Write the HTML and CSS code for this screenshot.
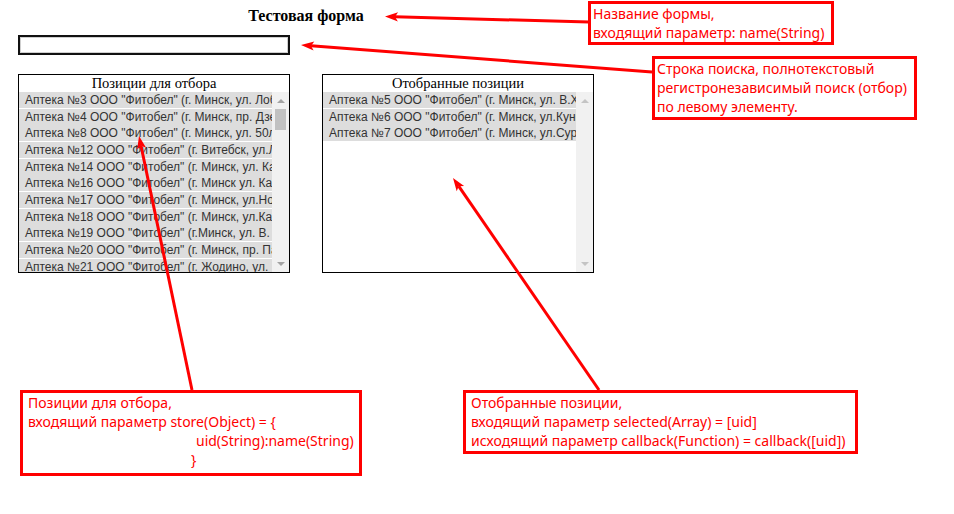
FILE: index.html
```html
<!DOCTYPE html>
<html lang="ru">
<head>
<meta charset="utf-8">
<title>Тестовая форма</title>
<link rel="stylesheet" href="styles.css">
</head>
<body>
<div class="page">
  <form class="form">
    <h1 class="form-title">Тестовая форма</h1>
    <input class="search" type="text">
    <div class="panels">
      <section class="panel">
        <div class="panel-title">Позиции для отбора</div>
        <div class="panel-body">
          <ul class="list">
            <li>Аптека №3 ООО "Фитобел" (г. Минск, ул. Лобанка, 94)</li>
            <li>Аптека №4 ООО "Фитобел" (г. Минск, пр. Дзержинского, 11)</li>
            <li>Аптека №8 ООО "Фитобел" (г. Минск, ул. 50лет Победы, 27)</li>
            <li>Аптека №12 ООО "Фитобел" (г. Витебск, ул.Ленина, 26)</li>
            <li>Аптека №14 ООО "Фитобел" (г. Минск, ул. Калиновского, 8)</li>
            <li>Аптека №16 ООО "Фитобел" (г. Минск ул. Казинца, 52)</li>
            <li>Аптека №17 ООО "Фитобел" (г. Минск, ул.Новаторская, 4)</li>
            <li>Аптека №18 ООО "Фитобел" (г. Минск, ул.Кальварийская, 7)</li>
            <li>Аптека №19 ООО "Фитобел" (г.Минск, ул. В. Хоружей, 32)</li>
            <li>Аптека №20 ООО "Фитобел" (г. Минск, пр. Партизанский, 6)</li>
            <li>Аптека №21 ООО "Фитобел" (г. Жодино, ул. Гагарина, 3)</li>
            <li>Аптека №22 ООО "Фитобел" (г. Минск, ул. Есенина, 1)</li>
          </ul>
          <div class="scrollbar">
            <span class="sb-btn"><i class="tri tri-up"></i></span>
            <span class="thumb"></span>
            <span class="sb-btn sb-end"><i class="tri tri-down"></i></span>
          </div>
        </div>
      </section>
      <section class="panel">
        <div class="panel-title">Отобранные позиции</div>
        <div class="panel-body">
          <ul class="list">
            <li>Аптека №5 ООО "Фитобел" (г. Минск, ул. В.Хоружей, 6)</li>
            <li>Аптека №6 ООО "Фитобел" (г. Минск, ул.Кунцевщина, 18)</li>
            <li>Аптека №7 ООО "Фитобел" (г. Минск, ул.Сурганова, 43)</li>
          </ul>
          <div class="scrollbar scrollbar-idle">
            <span class="sb-btn"><i class="tri tri-up"></i></span>
            <span class="sb-btn sb-end"><i class="tri tri-down"></i></span>
          </div>
        </div>
      </section>
    </div>
  </form>

  <div class="note note-name">Название формы,<br>входящий параметр: name(String)</div>
  <div class="note note-search">Строка поиска, полнотекстовый<br>регистронезависимый поиск (отбор)<br>по левому элементу.</div>
  <div class="note note-store">Позиции для отбора,<br>входящий параметр store(Object) = {<br><span class="indent-1">uid(String):name(String)</span><br><span class="indent-2">}</span></div>
  <div class="note note-selected">Отобранные позиции,<br>входящий параметр selected(Array) = [uid]<br>исходящий параметр callback(Function) = callback([uid])</div>

  <svg class="arrows" width="954" height="514" viewBox="0 0 954 514">
    <g stroke="#ff0000" stroke-width="3" fill="none" stroke-linecap="butt">
      <line x1="589" y1="22" x2="395" y2="16.8"/>
      <line x1="652" y1="72" x2="311" y2="45.8"/>
      <line x1="192" y1="390" x2="141" y2="145.8"/>
      <line x1="599" y1="390" x2="458.7" y2="186.2"/>
    </g>
    <g fill="#ff0000">
      <polygon points="385,16.5 398.1,12.3 395,16.8 397.9,21.4"/>
      <polygon points="301,45 314.3,41.5 311,45.8 313.6,50.5"/>
      <polygon points="139,136 146.1,147.8 141,145.8 137.2,149.6"/>
      <polygon points="453,178 464.1,186.1 458.7,186.2 456.7,191.3"/>
    </g>
  </svg>
</div>
</body>
</html>
```

FILE: styles.css
```css
html, body {
  margin: 0;
  padding: 0;
  background: #ffffff;
}

.page {
  position: relative;
  width: 954px;
  height: 514px;
  overflow: hidden;
}

.form {
  width: 576px;
  padding: 7px 0 0 18px;
  margin: 0;
}

.form-title {
  margin: 0;
  font: bold 16px/18px "Liberation Serif", "Times New Roman", serif;
  text-align: center;
  color: #000;
}

.search {
  display: block;
  box-sizing: border-box;
  width: 272px;
  height: 20px;
  margin: 10px 0 0 0;
  padding: 0 3px;
  border: 2px solid #111;
  box-shadow: inset 0 0 0 1px #cfcfcf;
  background: #fff;
  outline: none;
}

.panels {
  display: flex;
  gap: 32px;
  margin-top: 19px;
}

.panel {
  box-sizing: border-box;
  width: 272px;
  height: 199px;
  border: 1px solid #000;
  display: flex;
  flex-direction: column;
}

.panel-title {
  height: 17px;
  font: 14.5px/17px "Liberation Serif", "Times New Roman", serif;
  text-align: center;
  color: #000;
}

.panel-body {
  flex: 1;
  min-height: 0;
  display: flex;
}

.list {
  flex: 1;
  min-width: 0;
  margin: 0;
  padding: 0;
  list-style: none;
  overflow: hidden;
}

.list li {
  height: 16px;
  margin-bottom: 1px;
  padding-left: 6px;
  background: #dddddd;
  font: 12px/16px "Liberation Sans", Arial, sans-serif;
  color: #333;
  white-space: nowrap;
  overflow: hidden;
  text-overflow: clip;
}

.list li:nth-child(3n+2) {
  margin-bottom: 0;
}

.scrollbar {
  width: 17px;
  flex: none;
  background: #f1f1f1;
  display: flex;
  flex-direction: column;
}

.sb-btn {
  height: 17px;
  display: flex;
  align-items: center;
  justify-content: center;
}

.sb-end {
  margin-top: auto;
}

.thumb {
  height: 21px;
  width: 11px;
  margin-left: 3px;
  background: #c1c1c1;
}

.tri {
  width: 0;
  height: 0;
  border-left: 4px solid transparent;
  border-right: 4px solid transparent;
}

.tri-up {
  border-bottom: 4px solid #a3a3a3;
}

.tri-down {
  border-top: 4px solid #a3a3a3;
}

.scrollbar-idle .tri-up {
  border-bottom-color: #c4c4c4;
}

.scrollbar-idle .tri-down {
  border-top-color: #c4c4c4;
}

.note {
  position: absolute;
  box-sizing: border-box;
  border: 3px solid #ff0000;
  background: #fff;
  color: #ff0000;
  font: 14px/19px "Noto Sans", "Open Sans", sans-serif;
  padding: 0 0 0 2px;
  white-space: nowrap;
}

.note-name {
  left: 588px;
  top: 1px;
  width: 246px;
  height: 44px;
}

.note-search {
  left: 652px;
  top: 56px;
  width: 265px;
  height: 64px;
}

.note-store {
  left: 20px;
  top: 390px;
  width: 342px;
  height: 86px;
  padding-left: 5px;
}

.note-selected {
  left: 463px;
  top: 390px;
  width: 395px;
  height: 64px;
  padding-left: 5px;
}

.indent-1 {
  padding-left: 168px;
}

.indent-2 {
  padding-left: 163px;
}

.arrows {
  position: absolute;
  left: 0;
  top: 0;
  pointer-events: none;
}
```
